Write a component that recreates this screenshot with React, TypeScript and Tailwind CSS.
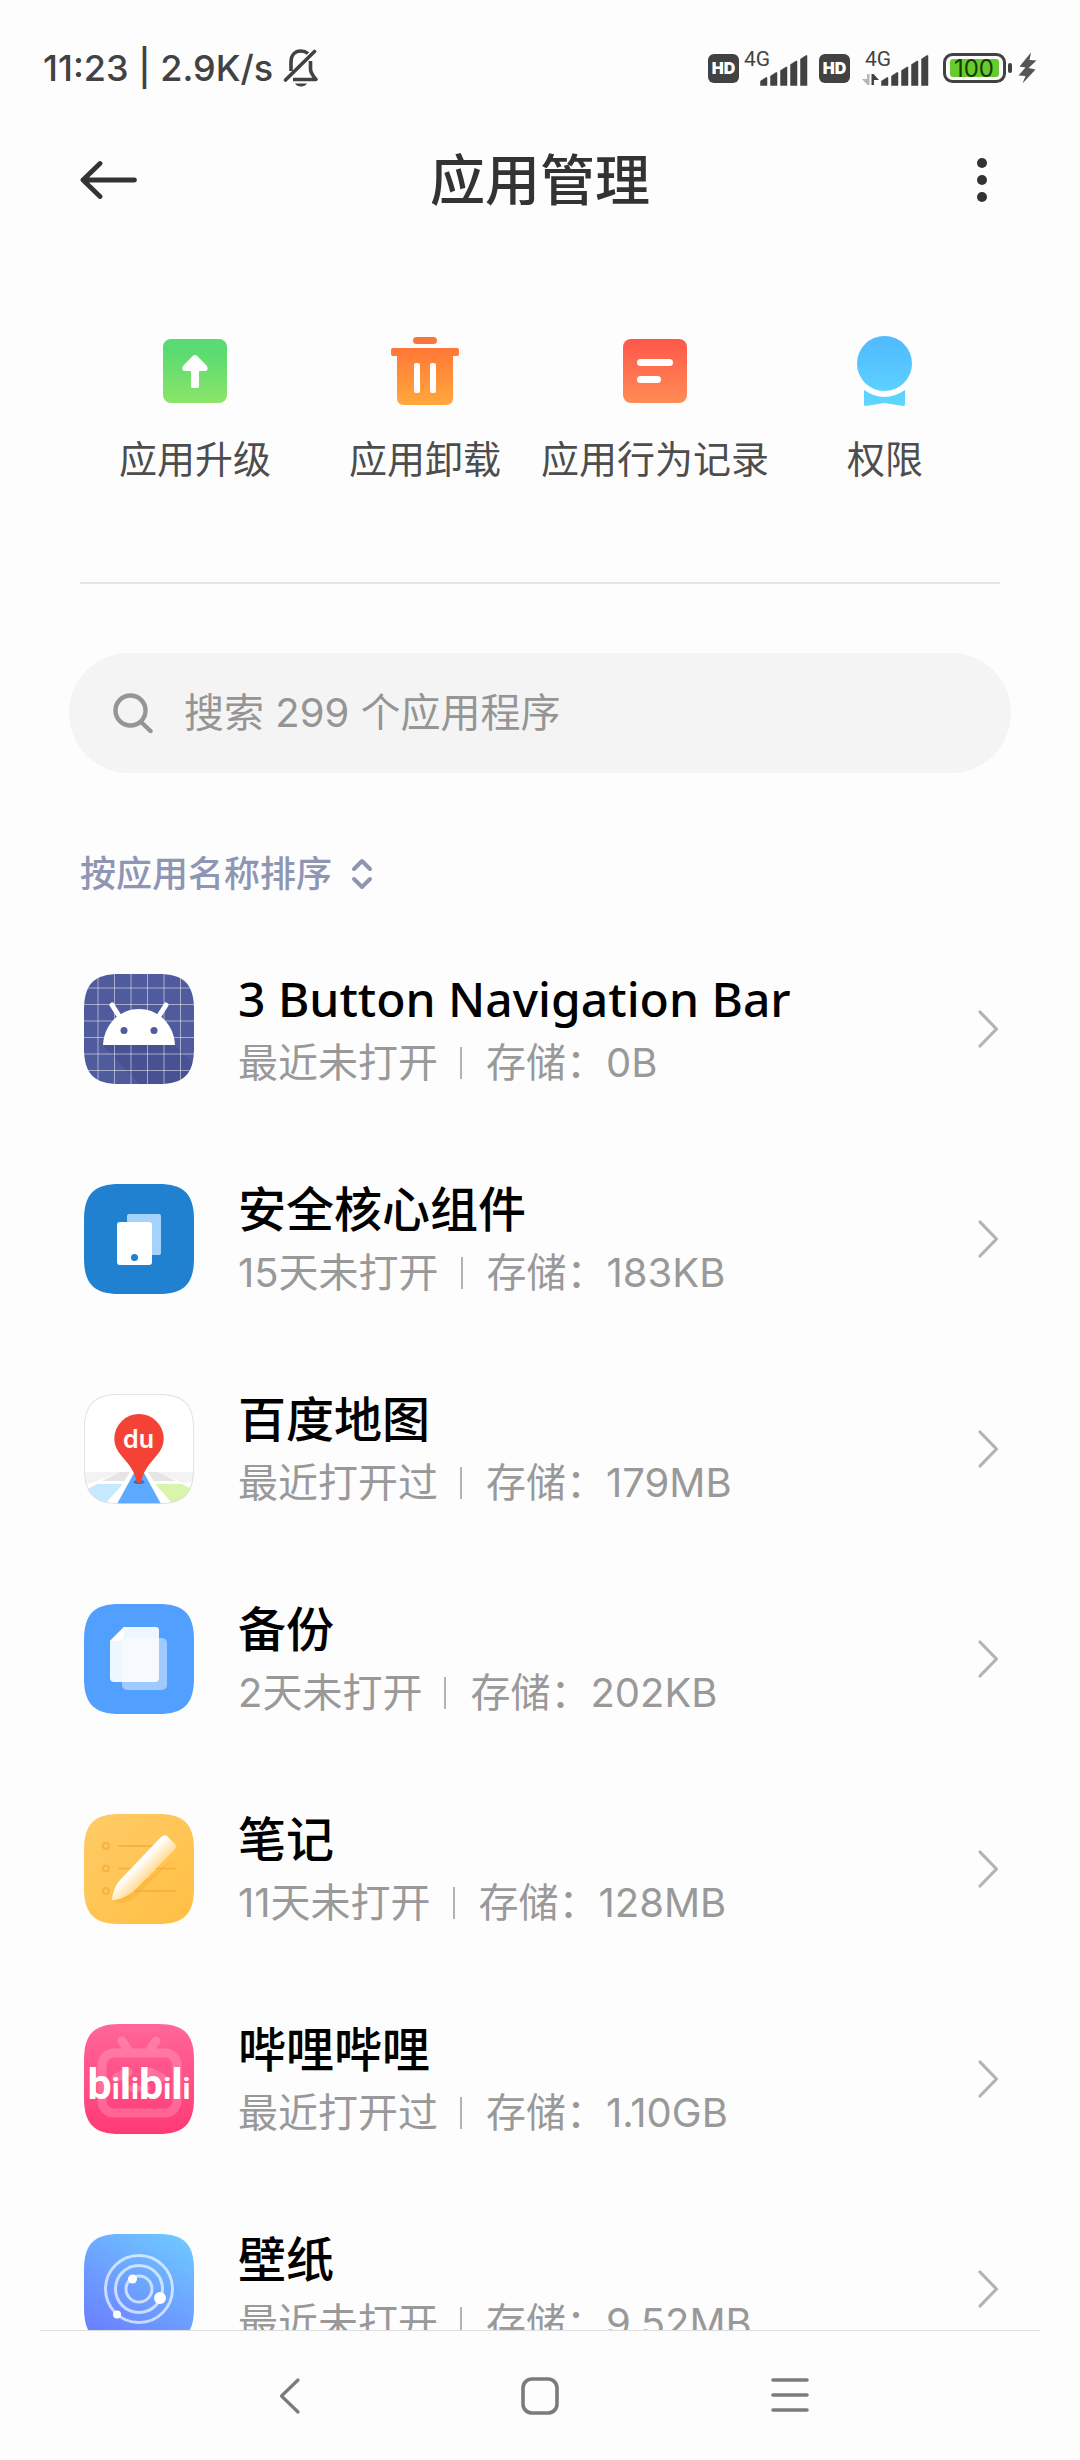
import type { ReactNode } from 'react';

const SQUIRCLE =
  'M0 36C0 10 10 0 36 0H74C100 0 110 10 110 36V74C110 100 100 110 74 110H36C10 110 0 100 0 74Z';

function BellOffIcon() {
  return (
    <svg width="36" height="38" viewBox="0 0 36 38" fill="none" stroke="#424242" strokeWidth="3.6" strokeLinecap="round" aria-label="静音">
      <path d="M8 22V13C8 6 12 2 18 2C21 2 23 2.800 25 4.500" strokeLinecap="butt" />
      <path d="M2.500 31L31.500 2.500" />
      <path d="M27.500 12V20C27.500 24 30 27 33 30.500H10" strokeLinecap="butt" strokeLinejoin="round" />
      <path d="M12 34.500H24C22 38.500 14 38.500 12 34.500Z" fill="#424242" stroke="none" />
    </svg>
  );
}

function HdBadge() {
  return (
    <span className="flex h-[29px] w-[31px] items-center justify-center rounded-[6px] bg-[#424242] font-[Inter,sans-serif] text-[16px] leading-none font-black text-white">
      HD
    </span>
  );
}

function Signal({ data = false }: { data?: boolean }) {
  const dx = data ? 10 : 0;
  const tops = [29.5, 24.5, 19, 13, 7.5];
  return (
    <svg width={data ? 76 : 72} height="40" viewBox={data ? '0 0 76 40' : '0 0 72 40'} fill="#424242">
      <text x={1 + dx} y="18" fontFamily="Roboto, sans-serif" fontSize="21">4G</text>
      {data && (
        <>
          <path d="M13 26H15.500V37H13.500L8 31H13Z" fill="#b5b5b5" />
          <path d="M17.500 26H19.500L25 32H20V37H17.500Z" />
        </>
      )}
      {tops.map((t, i) => {
        const x = 17.5 + dx + i * 10;
        return <path key={t} d={`M${x} 37.5V${t + 3.5}L${x + 5.5} ${t}H${x + 6.5}V37.5Z`} strokeLinejoin="round" stroke="#424242" strokeWidth="0.5" />;
      })}
    </svg>
  );
}

function Battery() {
  return (
    <svg width="80" height="32" viewBox="0 0 80 32">
      <rect x="10.500" y="2.500" width="60" height="27" rx="8" fill="none" stroke="#424242" strokeWidth="3" />
      <rect x="16" y="7" width="49" height="18" rx="3" fill="#68cb2d" />
      <rect x="74" y="11" width="4" height="10" rx="2" fill="#424242" />
      <text x="40" y="24.500" textAnchor="middle" fontFamily="Inter, sans-serif" fontSize="24" fill="#163a05">100</text>
    </svg>
  );
}

function StatusBar() {
  return (
    <div className="flex h-[104px] shrink-0 items-center justify-between pt-8 pr-[43px] pl-[43px]">
      <div className="flex items-center gap-2.5 font-[Inter,sans-serif] text-[36px] leading-10 font-medium text-[#424242]">
        <span>11:23 | 2.9K/s</span>
        <BellOffIcon />
      </div>
      <div className="flex items-center gap-1">
        <HdBadge />
        <Signal />
        <HdBadge />
        <Signal data />
        <Battery />
        <svg width="19" height="32" viewBox="0 0 19 32" fill="#555">
          <path d="M13 0.500L1.500 14.500L7.500 15.500L0.500 23.500L7.500 24L4.500 31.500L17.500 17.500L10.500 16L18.500 8.500L11.500 8Z" />
        </svg>
      </div>
    </div>
  );
}

function UpgradeIcon() {
  return (
    <svg width="72" height="72" viewBox="-4 -4 72 72">
      <defs>
        <linearGradient id="upgrade" x1="0" y1="0" x2="0" y2="1">
          <stop offset="0.200" stopColor="#5adb71" />
          <stop offset="1" stopColor="#8ce569" />
        </linearGradient>
      </defs>
      <rect width="64" height="64" rx="8" fill="url(#upgrade)" />
      <path d="M29.500 17.200Q32 14.800 34.500 17.200L44 27Q46 32 42 32H36V47.500Q36 49 34.500 49H29.500Q28 49 28 47.500V32H22Q18 32 20 27Z" fill="#fff" />
    </svg>
  );
}

function UninstallIcon() {
  return (
    <svg width="72" height="72" viewBox="0 0 72 72">
      <defs>
        <linearGradient id="uninstall" x1="0" y1="0" x2="0" y2="1">
          <stop offset="0" stopColor="#ff7738" />
          <stop offset="1" stopColor="#ffa83c" />
        </linearGradient>
      </defs>
      <rect x="24" y="2" width="24" height="7" rx="3.500" fill="#fa753a" />
      <path d="M4 13H68Q70 13 70 15V19Q70 21 68 21H64V63Q64 70 57 70H15Q8 70 8 63V21H4Q2 21 2 19V15Q2 13 4 13Z" fill="url(#uninstall)" />
      <rect x="25" y="28" width="6" height="30" rx="2" fill="#fff" />
      <rect x="41" y="28" width="6" height="30" rx="2" fill="#fff" />
    </svg>
  );
}

function RecordIcon() {
  return (
    <svg width="72" height="72" viewBox="-4 -4 72 72">
      <defs>
        <linearGradient id="record" x1="0" y1="0" x2="0" y2="1">
          <stop offset="0" stopColor="#ff574b" />
          <stop offset="1" stopColor="#ff8c55" />
        </linearGradient>
      </defs>
      <rect width="64" height="64" rx="8" fill="url(#record)" />
      <rect x="14" y="20" width="36" height="7" rx="3.500" fill="#fff" />
      <rect x="14" y="37" width="24" height="7" rx="3.500" fill="#fff" />
    </svg>
  );
}

function PermissionIcon() {
  return (
    <svg width="72" height="72" viewBox="0 -1 72 72">
      <defs>
        <linearGradient id="permission" x1="0" y1="0" x2="0" y2="72" gradientUnits="userSpaceOnUse">
          <stop offset="0.100" stopColor="#52bcff" />
          <stop offset="1" stopColor="#5fd8ff" />
        </linearGradient>
      </defs>
      <g fill="url(#permission)">
        <circle cx="35.500" cy="27.500" r="27.500" />
        <path d="M15 54Q25 61 35.500 61Q46 61 56 54V68.500Q56 70 54 70L35.500 67L17 70Q15 70 15 68.500Z" />
      </g>
    </svg>
  );
}

function AndroidApp() {
  const lines = [14, 30.5, 47, 63.5, 80, 96.5];
  return (
    <>
      <rect width="110" height="110" fill="#505b9d" />
      <path d="M19 71H91L110 90V110H55Z" fill="#3f4886" opacity="0.450" />
      {lines.map((p) => (
        <path key={p} d={`M${p} 0V110M0 ${p}H110`} stroke="#fff" strokeOpacity="0.5" />
      ))}
      <path d="M19 71C20 50 36 35 55 35S90 50 91 71Z" fill="#fff" />
      <path d="M28 31L37 45M82 31L73 45" stroke="#fff" strokeWidth="5" strokeLinecap="round" />
      <circle cx="40" cy="56.500" r="3.500" fill="#505b9d" />
      <circle cx="70" cy="56.500" r="3.500" fill="#505b9d" />
    </>
  );
}

function SecurityApp() {
  return (
    <>
      <rect width="110" height="110" fill="#1f81cf" />
      <rect x="43" y="30" width="34" height="41" rx="2" fill="#a5d2fa" />
      <rect x="33" y="38" width="35" height="43" rx="3" fill="#fff" />
      <circle cx="50.500" cy="73.500" r="3.500" fill="#1f81cf" />
    </>
  );
}

function BaiduMapApp() {
  return (
    <>
      <rect width="110" height="110" fill="#fff" />
      <path d="M0 78H110V88L100 89L72 78H38L8 89L0 90Z" fill="#f3f3f3" />
      <path d="M36 78H74L92 87H18Z" fill="#e5e5e5" />
      <path d="M0 97L13 90H39L21 110H0Z" fill="#c5eaff" />
      <path d="M71 90H98L110 96V110H89Z" fill="#d9f5ab" />
      <path d="M46 78H64L84 110H26Z" fill="#fff" />
      <path d="M50 79H60L77 110H33Z" fill="#5da9ff" />
      <ellipse cx="55" cy="88" rx="5.500" ry="2" fill="#3a6fb5" />
      <path d="M55 20A24.700 24.700 0 0 1 79.700 44.500C79.700 62 62 66 57.500 87Q55 92 52.500 87C48 66 30.300 62 30.300 44.500A24.700 24.700 0 0 1 55 20Z" fill="#f44336" />
      <text x="54.500" y="54" textAnchor="middle" fontFamily="Inter, sans-serif" fontSize="25" fontWeight="600" fill="#fff">du</text>
      <path d={SQUIRCLE} fill="none" stroke="#ddd" strokeWidth="1.500" />
    </>
  );
}

function BackupApp() {
  return (
    <>
      <rect width="110" height="110" fill="#519fff" />
      <path d="M40 23H72Q75 23 75 26V74Q75 78 71 78H30Q26 78 26 74V37Z" fill="#fff" opacity="0.900" />
      <rect x="38" y="34" width="45" height="52" rx="5" fill="#fff" opacity="0.450" />
      <path d="M26 37L40 23V31Q40 37 33 37Z" fill="#fff" />
    </>
  );
}

function NotesApp() {
  return (
    <>
      <defs>
        <linearGradient id="notes" x1="0" y1="0" x2="1" y2="1">
          <stop offset="0" stopColor="#ffcb68" />
          <stop offset="1" stopColor="#ffbf42" />
        </linearGradient>
        <linearGradient id="pencil" x1="52" y1="44" x2="66" y2="58" gradientUnits="userSpaceOnUse">
          <stop offset="0.300" stopColor="#fff" />
          <stop offset="1" stopColor="#ffe0a0" />
        </linearGradient>
      </defs>
      <rect width="110" height="110" fill="url(#notes)" />
      <g fill="none" stroke="#f7b244" strokeWidth="2">
        {[32, 54.5, 77].map((y) => (
          <g key={y}>
            <circle cx="22" cy={y} r="3" />
            <path d={`M34 ${y}H92`} />
          </g>
        ))}
      </g>
      <path d="M30 88C42 92 52 84 60 74L90 44L70 60Z" fill="#f5a623" opacity="0.350" />
      <path d="M28 86C29 78 31 71 37 65L77 23Q80 20 83 22L91 30Q93 33 91 35L51 76C44 82 36 86 28 86Z" fill="url(#pencil)" />
    </>
  );
}

function BilibiliApp() {
  return (
    <>
      <defs>
        <linearGradient id="bili" x1="0" y1="0" x2="0" y2="1">
          <stop offset="0" stopColor="#ff6798" />
          <stop offset="1" stopColor="#ff3a76" />
        </linearGradient>
      </defs>
      <rect width="110" height="110" fill="url(#bili)" />
      <g opacity="0.180" fill="none" stroke="#fff" strokeWidth="9" strokeLinecap="round">
        <rect x="18" y="29" width="75" height="60" rx="12" />
        <path d="M38 17L43 24M72 17L67 24M32 54L44 48M66 48L78 54" />
        <path d="M46 64Q51 68 55 64Q60 68 64 64" strokeWidth="5" />
      </g>
      <text x="55" y="75" textAnchor="middle" fontFamily="Roboto, sans-serif" fontWeight="700" fill="#fff">
        <tspan fontSize="43">b</tspan>
        <tspan fontSize="30">i</tspan>
        <tspan fontSize="43">l</tspan>
        <tspan fontSize="30">i</tspan>
        <tspan fontSize="43">b</tspan>
        <tspan fontSize="30">i</tspan>
        <tspan fontSize="43">l</tspan>
        <tspan fontSize="30">i</tspan>
      </text>
    </>
  );
}

function WallpaperApp() {
  return (
    <>
      <defs>
        <linearGradient id="wall" x1="0.800" y1="0" x2="0.200" y2="1">
          <stop offset="0" stopColor="#6ec6ff" />
          <stop offset="1" stopColor="#6b7dff" />
        </linearGradient>
      </defs>
      <rect width="110" height="110" fill="url(#wall)" />
      <g fill="none" stroke="#fff" strokeOpacity="0.650" strokeWidth="3">
        <circle cx="55" cy="55" r="33.500" />
        <circle cx="55" cy="55" r="23.500" />
        <circle cx="55" cy="55" r="13" />
      </g>
      <g fill="#fff">
        <circle cx="48.500" cy="45" r="4.500" />
        <circle cx="76" cy="64" r="6" />
        <circle cx="33" cy="80.500" r="4" />
      </g>
    </>
  );
}

const features: { label: string; icon: ReactNode }[] = [
  { label: '应用升级', icon: <UpgradeIcon /> },
  { label: '应用卸载', icon: <UninstallIcon /> },
  { label: '应用行为记录', icon: <RecordIcon /> },
  { label: '权限', icon: <PermissionIcon /> },
];

const apps: { name: string; opened: string; size: string; art: ReactNode }[] = [
  { name: '3 Button Navigation Bar', opened: '最近未打开', size: '0B', art: <AndroidApp /> },
  { name: '安全核心组件', opened: '15天未打开', size: '183KB', art: <SecurityApp /> },
  { name: '百度地图', opened: '最近打开过', size: '179MB', art: <BaiduMapApp /> },
  { name: '备份', opened: '2天未打开', size: '202KB', art: <BackupApp /> },
  { name: '笔记', opened: '11天未打开', size: '128MB', art: <NotesApp /> },
  { name: '哔哩哔哩', opened: '最近打开过', size: '1.10GB', art: <BilibiliApp /> },
  { name: '壁纸', opened: '最近未打开', size: '9.52MB', art: <WallpaperApp /> },
];

export default function App() {
  return (
    <div className="flex h-screen flex-col overflow-hidden bg-[#fdfdfd] font-[Inter,'Noto_Sans_CJK_SC',sans-serif]">
      <StatusBar />
      <header className="flex h-[152px] shrink-0 items-center justify-between px-20">
        <button aria-label="返回" className="flex w-[58px]">
          <svg width="58" height="40" viewBox="0 0 58 40" fill="none" stroke="#333" strokeWidth="4.800" strokeLinecap="round" strokeLinejoin="round">
            <path d="M54.500 20H3M20 3.500L3 20L20 36.500" />
          </svg>
        </button>
        <h1 className="text-[55px] leading-none font-medium text-[#333]">应用管理</h1>
        <button aria-label="更多" className="flex w-[58px] justify-end pr-3">
          <svg width="12" height="46" viewBox="0 0 12 46" fill="#333">
            <circle cx="6" cy="6" r="5" />
            <circle cx="6" cy="23" r="5" />
            <circle cx="6" cy="40" r="5" />
          </svg>
        </button>
      </header>

      <main className="flex min-h-0 flex-1 flex-col overflow-hidden">
        <section className="mx-20 grid shrink-0 grid-cols-4 border-b-2 border-[#e5e5e5] pt-[79px] pb-[99px]">
          {features.map((f) => (
            <button key={f.label} className="flex flex-col items-center gap-7">
              {f.icon}
              <span className="text-[38px] leading-[48px] whitespace-nowrap text-[#4d4d4d]">{f.label}</span>
            </button>
          ))}
        </section>

        <label className="mx-[69px] mt-[69px] flex h-[120px] shrink-0 items-center gap-[29px] rounded-full bg-[#f4f4f4] pl-11">
          <svg width="42" height="42" viewBox="0 0 42 42" fill="none" stroke="#959595" strokeWidth="4.400" strokeLinecap="round">
            <circle cx="17.500" cy="18.500" r="15" />
            <path d="M28 30L37.500 39" />
          </svg>
          <input
            type="search"
            aria-label="搜索应用"
            placeholder="搜索 299 个应用程序"
            className="min-w-0 flex-1 bg-transparent text-[40px] leading-[60px] text-[#333] outline-none placeholder:text-[#959595]"
          />
        </label>

        <button className="mt-[77px] mb-[26px] ml-20 flex h-12 shrink-0 items-center gap-[18px] self-start text-[36px] leading-[48px] font-medium text-[#8f96b3]">
          按应用名称排序
          <svg width="24" height="34" viewBox="0 0 24 34" fill="none" stroke="#8f96b3" strokeWidth="4" strokeLinecap="round" strokeLinejoin="round">
            <path d="M4 12L12 4L20 12M4 22L12 30L20 22" />
          </svg>
        </button>

        <ul className="flex shrink-0 flex-col">
          {apps.map((a) => (
            <li key={a.name}>
              <button className="flex h-[210px] w-full items-center gap-11 pr-20 pl-[84px] text-left">
                <svg width="110" height="110" viewBox="0 0 110 110" className="shrink-0">
                  <clipPath id={`clip-${a.size}`}>
                    <path d={SQUIRCLE} />
                  </clipPath>
                  <g clipPath={`url(#clip-${a.size})`}>{a.art}</g>
                </svg>
                <span className="flex min-w-0 flex-1 flex-col">
                  <span className="font-['Noto_Sans','Noto_Sans_CJK_SC',sans-serif] text-[48px] leading-[68px] font-medium text-black">
                    {a.name}
                  </span>
                  <span className="flex items-center text-[40px] leading-[60px] text-[#999]">
                    <span>{a.opened}</span>
                    <span className="mr-6 ml-[22px] h-8 w-0.5 bg-[#b3b3b3]" />
                    <span>存储：{a.size}</span>
                  </span>
                </span>
                <svg width="24" height="40" viewBox="0 0 24 40" fill="none" stroke="#b3b3b3" strokeWidth="3.200" strokeLinecap="round" strokeLinejoin="round" className="shrink-0">
                  <path d="M4 3L20.500 20L4 37" />
                </svg>
              </button>
            </li>
          ))}
        </ul>
      </main>

      <nav className="mx-10 flex h-[130px] shrink-0 items-center justify-center border-t border-[#dedede]">
        <button aria-label="后退" className="flex w-[250px] justify-center">
          <svg width="40" height="40" viewBox="0 0 40 40" fill="none" stroke="#7b7b7b" strokeWidth="3.200" strokeLinecap="round" strokeLinejoin="round">
            <path d="M28 4L11.500 20L28 36" />
          </svg>
        </button>
        <button aria-label="主屏幕" className="flex w-[250px] justify-center">
          <svg width="40" height="40" viewBox="0 0 40 40" fill="none" stroke="#7b7b7b" strokeWidth="3.600">
            <rect x="3" y="3" width="34" height="34" rx="9" />
          </svg>
        </button>
        <button aria-label="最近任务" className="flex w-[250px] justify-center">
          <svg width="40" height="40" viewBox="0 0 40 40" stroke="#7b7b7b" strokeWidth="3.600" strokeLinecap="round">
            <path d="M3 4H37M3 19H37M3 34H37" />
          </svg>
        </button>
      </nav>
    </div>
  );
}
